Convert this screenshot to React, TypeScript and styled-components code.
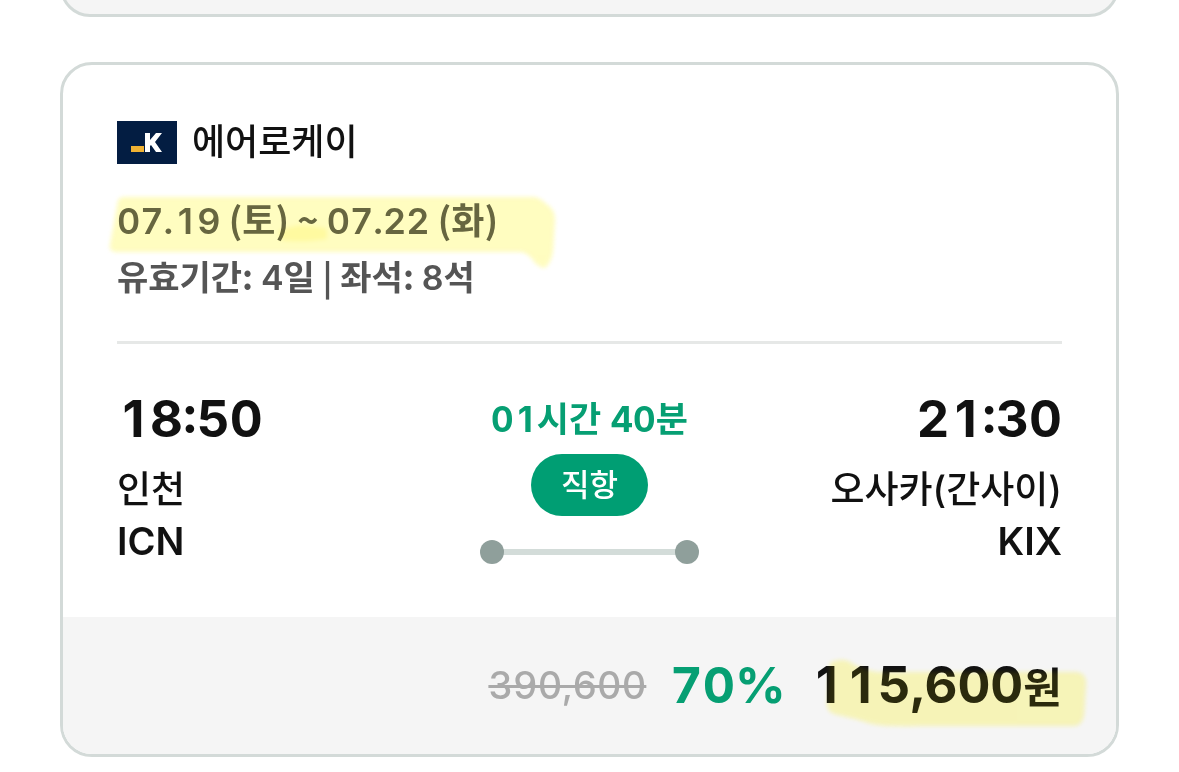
import React from 'react';
import styled, { createGlobalStyle } from 'styled-components';

const Global = createGlobalStyle`
  *, *::before, *::after { box-sizing: border-box; }
  body { margin: 0; background: #fff; color: #111; font-family: Inter, "Noto Sans CJK KR", sans-serif; font-size: 36px; overflow-x: hidden; }
  p, h2 { margin: 0; }
`;
const Page = styled.main`
  padding: 0 60px 14px;
  overflow: hidden;
`;
const PreviousCard = styled.div`
  height: 60px;
  margin: -43px 0 45px;
  border: 3px solid #d3dad8;
  border-radius: 32px;
  background: #f5f5f5;
`;
const Card = styled.article`
  border: 3px solid #d3dad8;
  border-radius: 32px;
  background: #fff;
  overflow: hidden;
`;
const Body = styled.div`
  padding: 52px 54px 53px;
`;
const Airline = styled.div`
  display: flex;
  align-items: center;
  gap: 15px;
  height: 50px;
`;
const Logo = styled.svg`
  width: 60px;
  height: 43px;
`;
const Name = styled.h2`
  font-size: 36px;
  font-weight: 500;
  line-height: 54px;
`;
const Info = styled.div`
  padding: 23px 0 36px;
  border-bottom: 3px solid #e6e8e7;
`;
const InfoLine = styled.p`
  position: relative;
  color: #555;
  font-family: "Noto Sans CJK KR", sans-serif;
  font-size: 34px;
  font-weight: 600;
  line-height: 59px;
`;
const Dates = styled(InfoLine)`
  font-size: 36px;
  line-height: 56px;
`;
const Count = styled.span`
  font-family: Inter, sans-serif;
  line-height: 36px;
`;
const Tabular = styled(Count)`
  font-variant-numeric: tabular-nums;
`;
const One = styled.span<{ $width: number }>`
  display: inline-block;
  width: ${(p) => p.$width}px;
  font-variant-numeric: normal;
  text-align: center;
`;
const Mark = styled.svg<{ $blend: 'multiply' | 'normal' }>`
  position: absolute;
  pointer-events: none;
  overflow: visible;
  filter: blur(2px);
  mix-blend-mode: ${(p) => p.$blend};
  fill: ${(p) => (p.$blend === 'multiply' ? '#fffed8' : '#fff000')};
  opacity: ${(p) => (p.$blend === 'multiply' ? 1 : 0.11)};
`;
const DateMark = styled(Mark)`
  left: -8px;
  top: 3px;
  width: 448px;
  height: 76px;
`;
const PriceMark = styled(Mark)`
  right: -28px;
  top: 0;
  width: 264px;
  height: 80px;
`;
const Route = styled.div`
  display: grid;
  grid-template-columns: 1fr auto 1fr;
  padding-top: 40px;
`;
const Stop = styled.div<{ $end?: boolean }>`
  text-align: ${(p) => (p.$end ? 'right' : 'left')};
`;
const Time = styled.p`
  font-size: 51px;
  font-weight: 700;
  font-kerning: none;
  font-variant-numeric: tabular-nums;
  line-height: 70px;
`;
const City = styled.p`
  font-size: 37px;
  font-weight: 500;
  line-height: 72px;
`;
const Code = styled.p`
  font-size: 38px;
  font-weight: 600;
  line-height: 30px;
`;
const Flight = styled.div`
  display: flex;
  flex-direction: column;
  align-items: center;
`;
const Duration = styled.p`
  color: #069f73;
  font-size: 35px;
  font-weight: 700;
  font-variant-numeric: tabular-nums;
  line-height: 70px;
`;
const Badge = styled.span`
  padding: 0 30px;
  border-radius: 32px;
  background: #009e73;
  color: #fff;
  font-size: 31px;
  font-weight: 500;
  line-height: 62px;
`;
const Track = styled.svg`
  width: 219px;
  height: 24px;
  margin-top: 24px;
`;
const Footer = styled.footer`
  display: flex;
  justify-content: flex-end;
  align-items: center;
  padding: 32px 54px 33px;
  background: #f5f5f5;
  font-variant-numeric: tabular-nums;
  line-height: 72px;
`;
const OldPrice = styled.del`
  color: #aaa;
  font-size: 38px;
  font-weight: 500;
`;
const Discount = styled.span`
  margin-left: 24px;
  color: #069f73;
  font-size: 50px;
  font-weight: 700;
`;
const Price = styled.strong`
  position: relative;
  margin-left: 24px;
  font-size: 51px;
  font-weight: 700;
  font-kerning: none;
`;
const Won = styled.span`
  font-size: 42px;
  line-height: 42px;
`;

/* Gives the narrow "1" the same advance as the other figures. */
function Figures({ children, one }: { children: string; one: number }) {
  return (
    <>
      {children.split(/(1)/).map((part, i) =>
        part === '1' ? <One key={i} $width={one}>1</One> : part,
      )}
    </>
  );
}

const datePath =
  'M9 8Q10 4 16 4H424Q430 4 436 10Q446 16 446 26L444 58Q442 70 436 75Q432 75 426 70Q420 60 412 59H6Q0 58 1 52Z';
const pricePath =
  'M4 14Q12 9 22 12Q34 20 50 23H248Q260 23 260 34L258 66Q256 77 248 77H92Q62 78 46 75Q28 69 8 65Q1 62 1 56Z';

export default function App() {
  return (
    <>
      <Global />
      <Page>
        <PreviousCard />
        <Card>
          <Body>
            <Airline>
              <Logo viewBox="0 0 60 43" aria-hidden="true">
                <rect width="60" height="43" fill="#031d42" />
                <rect x="14" y="25" width="13" height="6" fill="#f0b233" />
                <path d="M28 12h5v7l6-7h6l-7 9 7 10h-6l-5-7-1 1v6h-5z" fill="#fff" />
              </Logo>
              <Name>에어로케이</Name>
            </Airline>
            <Info>
              <Dates>
                <Tabular><Figures one={24}>07.19</Figures></Tabular> (토) ~ <Tabular>07.22</Tabular> (화)
                <DateMark $blend="multiply" viewBox="0 0 448 76" aria-hidden="true">
                  <path d={datePath} />
                  <path d="M170 38Q190 28 218 36V46Q190 50 172 47Z" fill="#fffbb4" />
                </DateMark>
                <DateMark $blend="normal" viewBox="0 0 448 76" aria-hidden="true">
                  <path d={datePath} />
                </DateMark>
              </Dates>
              <InfoLine>
                유효기간: <Count>4</Count>일 | 좌석: <Count>8</Count>석
              </InfoLine>
            </Info>
            <Route>
              <Stop>
                <Time><Figures one={33}>18:50</Figures></Time>
                <City>인천</City>
                <Code>ICN</Code>
              </Stop>
              <Flight>
                <Duration><Figures one={23}>01시간 40분</Figures></Duration>
                <Badge>직항</Badge>
                <Track viewBox="0 0 219 24" aria-hidden="true">
                  <path d="M12 12h195" stroke="#d3dcd9" strokeWidth="6" />
                  <circle cx="12" cy="12" r="12" fill="#8f9f9b" />
                  <circle cx="207" cy="12" r="12" fill="#8f9f9b" />
                </Track>
              </Flight>
              <Stop $end>
                <Time><Figures one={33}>21:30</Figures></Time>
                <City>오사카(간사이)</City>
                <Code>KIX</Code>
              </Stop>
            </Route>
          </Body>
          <Footer>
            <OldPrice>390,600</OldPrice>
            <Discount>70%</Discount>
            <Price>
              <Figures one={34}>115,600</Figures><Won>원</Won>
              <PriceMark $blend="multiply" viewBox="0 0 264 80" aria-hidden="true">
                <path d={pricePath} />
              </PriceMark>
              <PriceMark $blend="normal" viewBox="0 0 264 80" aria-hidden="true">
                <path d={pricePath} />
              </PriceMark>
            </Price>
          </Footer>
        </Card>
      </Page>
    </>
  );
}
